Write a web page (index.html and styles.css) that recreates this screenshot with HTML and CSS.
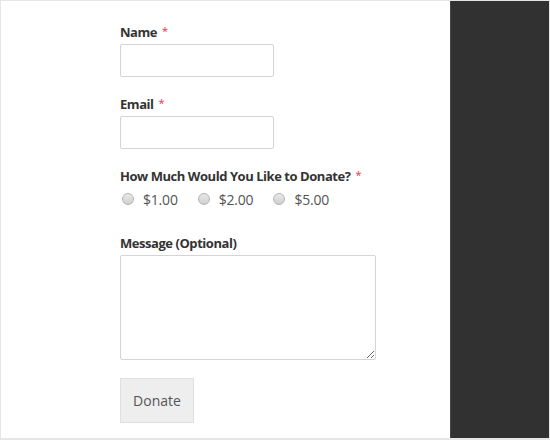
FILE: index.html
```html
<!DOCTYPE html>
<html>
<head>
<meta charset="utf-8">
<link rel="stylesheet" href="styles.css">
</head>
<body>
<div class="frame">
  <main class="content">
    <form class="form">
      <div class="field">
        <label class="label">Name <span class="req">*</span></label>
        <input class="input" type="text">
      </div>
      <div class="field">
        <label class="label">Email <span class="req">*</span></label>
        <input class="input" type="text">
      </div>
      <div class="field">
        <label class="label">How Much Would You Like to Donate? <span class="req">*</span></label>
        <div class="radios">
          <label class="radio"><input type="radio" name="amt"><span>$1.00</span></label>
          <label class="radio"><input type="radio" name="amt"><span>$2.00</span></label>
          <label class="radio"><input type="radio" name="amt"><span>$5.00</span></label>
        </div>
      </div>
      <div class="field field-msg">
        <label class="label">Message (Optional)</label>
        <textarea class="textarea"></textarea>
      </div>
      <button type="button" class="btn">Donate</button>
    </form>
  </main>
  <aside class="sidebar"></aside>
</div>
</body>
</html>
```
FILE: styles.css
```css
html, body {
  margin: 0;
  padding: 0;
  background: #fff;
}
.frame {
  width: 550px;
  height: 440px;
  box-sizing: border-box;
  border: 1px solid #e6e6e6;
  border-bottom-width: 2px;
  display: flex;
  font-family: "Open Sans", "Liberation Sans", sans-serif;
}
.content {
  width: 449px;
  box-sizing: border-box;
  padding: 21px 0 0 119px;
}
.sidebar {
  flex: 1;
  background: #313131;
  border-left: 1px solid #454545;
}
.form {
  display: flex;
  flex-direction: column;
  align-items: flex-start;
}
.field {
  display: flex;
  flex-direction: column;
  margin-bottom: 17px;
}
.label {
  height: 20px;
  font-size: 13px;
  font-weight: 700;
  line-height: 20px;
  color: #333;
  letter-spacing: -0.45px;
  margin-bottom: 2px;
}
.req {
  color: #e8304a;
  font-weight: 400;
  font-size: 11px;
  line-height: 0;
  vertical-align: 2px;
  letter-spacing: 0;
  margin-left: 2px;
}
.input {
  width: 154px;
  height: 33px;
  box-sizing: border-box;
  border: 1px solid #d4d4d4;
  border-radius: 2px;
  margin: 0;
  padding: 0 6px;
  background: #fff;
}
.radios {
  display: flex;
  gap: 18px;
  height: 22px;
  align-items: center;
  margin-bottom: 6px;
}
.radio {
  display: flex;
  align-items: center;
  gap: 9px;
  font-size: 14px;
  color: #555;
  letter-spacing: -0.2px;
}
.radio input {
  appearance: none;
  -webkit-appearance: none;
  width: 12px;
  height: 12px;
  margin: 0 0 0 2px;
  border-radius: 50%;
  border: 1px solid #b5b5b5;
  background: linear-gradient(#e9e9e9, #cfcfcf);
  box-sizing: border-box;
}
.field-msg {
  margin-bottom: 18px;
}
.textarea {
  width: 256px;
  height: 105px;
  box-sizing: border-box;
  border: 1px solid #d4d4d4;
  border-radius: 2px;
  margin: 0;
  padding: 4px;
  background: #fff;
}
.btn {
  width: 74px;
  height: 45px;
  background: #eeeeee;
  border: 1px solid #e0e0e0;
  border-radius: 0;
  color: #555;
  font-family: "Open Sans", "Liberation Sans", sans-serif;
  font-size: 14px;
  padding: 0;
}
```
